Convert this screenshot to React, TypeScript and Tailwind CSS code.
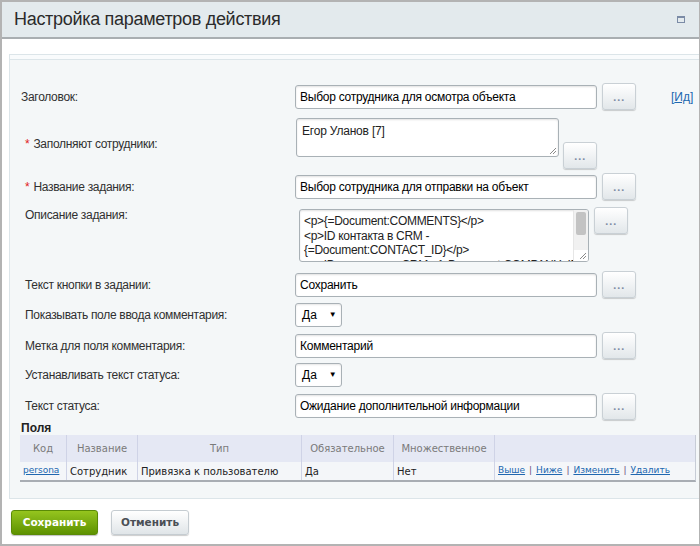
import React from "react";

const Dots = ({ cls = "" }: { cls?: string }) => (
  <div
    className={`h-[27px] w-[34px] shrink-0 rounded-[3px] border border-[#c9d0d5] bg-linear-to-b from-white to-[#e2e7ea] shadow-[0_1px_1px_rgba(0,0,0,0.18)] flex items-center justify-center ${cls}`}
  >
    <span className="text-[#7f8ba3] text-[9px] leading-none font-bold tracking-[0.5px] pt-[3px] font-['DejaVu_Sans',sans-serif]">
      ...
    </span>
  </div>
);

const Input = ({ value, w = "w-[302px]" }: { value: string; w?: string }) => (
  <div
    className={`h-[24px] ${w} shrink-0 rounded-[3px] border border-[#a9b1b6] bg-white shadow-[inset_0_1px_2px_rgba(0,0,0,0.12)] pl-[4px] flex items-center text-[12px] tracking-[-0.25px] text-black whitespace-nowrap overflow-hidden`}
  >
    {value}
  </div>
);

const Select = () => (
  <div className="h-[24px] w-[47px] rounded-[3px] border border-[#a9b1b6] bg-white shadow-[inset_0_1px_2px_rgba(0,0,0,0.1)] pl-[6px] flex items-center text-[12px] text-black">
    <span>Да</span>
    <span className="ml-[12px] text-[8px] leading-none">▼</span>
  </div>
);

const Grip = () => (
  <svg className="absolute right-[1px] bottom-[1px]" width="8" height="8" viewBox="0 0 8 8">
    <line x1="7" y1="1" x2="1" y2="7" stroke="#8a8a8a" strokeWidth="1" />
    <line x1="7" y1="4" x2="4" y2="7" stroke="#8a8a8a" strokeWidth="1" />
  </svg>
);

const Label = ({ text, req = false, cls = "" }: { text: string; req?: boolean; cls?: string }) => (
  <div className={`w-[270px] shrink-0 pl-[15px] text-[12px] tracking-[-0.3px] text-[#303030] ${cls}`}>
    {req && <span className="text-[#e02020] mr-[4px]">*</span>}
    {text}
  </div>
);

export default function App() {
  return (
    <div className="w-[700px] h-[546px] bg-white border-2 border-r border-[#b3b3b3] flex flex-col font-['Liberation_Sans',Arial,sans-serif] overflow-hidden">
      {/* title bar */}
      <div className="h-[37px] shrink-0 bg-[#e3eaed] border-b-2 border-[#a9aeb1] flex items-center pl-[12px] pr-[14px]">
        <div className="text-[18px] text-[#2b2b2b] tracking-[-0.3px]">Настройка параметров действия</div>
        <div className="ml-auto w-[8px] h-[7px] border border-[#7b8ba6] border-t-2" />
      </div>

      {/* body */}
      <div className="flex-1 flex flex-col pt-[15px] pl-[7px]">
        <div className="h-[445px] border-l border-t border-b border-[#dce5e9] bg-[#f4f7f8] flex flex-col">
          <div className="h-[5px] bg-[#f9fbfc] border-b border-[#dce5e9]" />
          <div className="flex flex-col">
            {/* R1 */}
            <div className="mt-[23px] h-[27px] flex items-center">
              <Label text="Заголовок:" cls="!pl-[11px] w-[274px]" />
              <div className="ml-[11px] flex items-center">
                <Input value="Выбор сотрудника для осмотра объекта" />
                <Dots cls="ml-[5px]" />
              </div>
              <div className="ml-[35px] text-[12px] text-[#2067b0]">
                [<span className="underline">Ид</span>]
              </div>
            </div>
            {/* R2 */}
            <div className="mt-[8px] h-[51px] flex items-center">
              <Label text="Заполняют сотрудники:" req />
              <div className="ml-[16px] h-full flex">
                <div className="relative h-[39px] w-[263px] rounded-[3px] border border-[#a9b1b6] bg-white shadow-[inset_0_1px_2px_rgba(0,0,0,0.12)] pl-[5px] pt-[3px] text-[12px] tracking-[-0.2px] text-[#222]">
                  Егор Уланов [7]
                  <Grip />
                </div>
                <Dots cls="ml-[4px] self-end" />
              </div>
            </div>
            {/* R3 */}
            <div className="mt-[5px] h-[25px] flex items-center">
              <Label text="Название задания:" req />
              <div className="ml-[15px] flex items-center">
                <Input value="Выбор сотрудника для отправки на объект" />
                <Dots cls="ml-[5px] h-[25px]" />
              </div>
            </div>
            {/* R4 */}
            <div className="mt-[8px] h-[55px] flex items-start">
              <Label text="Описание задания:" cls="-mt-[1px]" />
              <div className="ml-[19px] flex items-start">
                <div className="relative mt-[2px] h-[53px] w-[290px] rounded-[3px] border border-[#a9b1b6] bg-white shadow-[inset_0_1px_2px_rgba(0,0,0,0.12)] overflow-hidden flex">
                  <div className="flex-1 pl-[4px] pt-[4px] text-[12px] tracking-[-0.3px] leading-[14.5px] text-[#222] whitespace-nowrap overflow-hidden">
                    <div>&lt;p&gt;{"{=Document:COMMENTS}"}&lt;/p&gt;</div>
                    <div>&lt;p&gt;ID контакта в CRM -</div>
                    <div>{"{=Document:CONTACT_ID}"}&lt;/p&gt;</div>
                    <div>&lt;p&gt;ID компании в CRM - {"{=Document:COMPANY_ID}"}&lt;/p&gt;</div>
                  </div>
                  <div className="w-[15px] shrink-0 bg-[#f1f1f1] border-l border-[#e6e6e6] relative">
                    <div className="mx-[2px] mt-[2px] h-[23px] rounded-[2px] bg-[#c3c3c3]" />
                    <div className="absolute bottom-0 left-0 right-0 h-[11px] bg-white" />
                  </div>
                  <Grip />
                </div>
                <Dots cls="ml-[5px]" />
              </div>
            </div>
            {/* R5 */}
            <div className="mt-[9px] h-[27px] flex items-center">
              <Label text="Текст кнопки в задании:" />
              <div className="ml-[15px] flex items-center">
                <Input value="Сохранить" />
                <Dots cls="ml-[5px]" />
              </div>
            </div>
            {/* R6 */}
            <div className="mt-[5px] h-[24px] flex items-center">
              <Label text="Показывать поле ввода комментария:" />
              <div className="ml-[15px]">
                <Select />
              </div>
            </div>
            {/* R7 */}
            <div className="mt-[5px] h-[27px] flex items-center">
              <Label text="Метка для поля комментария:" />
              <div className="ml-[15px] flex items-center">
                <Input value="Комментарий" />
                <Dots cls="ml-[5px]" />
              </div>
            </div>
            {/* R8 */}
            <div className="mt-[4px] h-[24px] flex items-center">
              <Label text="Устанавливать текст статуса:" />
              <div className="ml-[15px]">
                <Select />
              </div>
            </div>
            {/* R9 */}
            <div className="mt-[6px] h-[26px] flex items-center">
              <Label text="Текст статуса:" />
              <div className="ml-[15px] flex items-center">
                <Input value="Ожидание дополнительной информации" />
                <Dots cls="ml-[5px] h-[26px]" />
              </div>
            </div>
            {/* Поля */}
            <div className="pl-[11px] text-[12px] font-bold text-[#222] leading-[14px] mt-[2px]">Поля</div>
            <div className="ml-[10px] w-[676px] border-r border-b-2 border-[#c7ccd6] border-b-[#a8adb3] font-['DejaVu_Sans',Verdana,sans-serif] text-[10px]">
              <div className="h-[27px] bg-[#e5e8f4] flex text-[#7a7a7a]">
                <div className="w-[47px] flex items-center justify-center border-r border-[#cfd3e6]">Код</div>
                <div className="w-[71px] flex items-center justify-center border-r border-[#cfd3e6]">Название</div>
                <div className="w-[164px] flex items-center justify-center border-r border-[#cfd3e6]">Тип</div>
                <div className="w-[92px] flex items-center justify-center border-r border-[#cfd3e6]">Обязательное</div>
                <div className="w-[101px] flex items-center justify-center border-r border-[#cfd3e6]">Множественное</div>
                <div className="flex-1" />
              </div>
              <div className="h-[18px] bg-[#f4f6f9] flex text-[#222] items-stretch">
                <div className="w-[47px] flex items-center pl-[3px] border-r border-[#cfd3e6]">
                  <span className="text-[#2067b0] underline text-[9px]">persona</span>
                </div>
                <div className="w-[71px] flex items-center pl-[3px] border-r border-[#cfd3e6]">Сотрудник</div>
                <div className="w-[164px] flex items-center pl-[3px] border-r border-[#cfd3e6]">Привязка к пользователю</div>
                <div className="w-[92px] flex items-center pl-[3px] border-r border-[#cfd3e6]">Да</div>
                <div className="w-[101px] flex items-center pl-[3px] border-r border-[#cfd3e6]">Нет</div>
                <div className="flex-1 flex items-center pl-[3px] text-[#2067b0] text-[9px]">
                  <span className="underline">Выше</span>
                  <span className="mx-[4px] text-[#6a4a7a]">|</span>
                  <span className="underline">Ниже</span>
                  <span className="mx-[4px] text-[#6a4a7a]">|</span>
                  <span className="underline">Изменить</span>
                  <span className="mx-[4px] text-[#6a4a7a]">|</span>
                  <span className="underline">Удалить</span>
                </div>
              </div>
            </div>
          </div>
        </div>

        {/* buttons */}
        <div className="mt-[11px] ml-[2px] flex gap-[13px] font-['DejaVu_Sans',Verdana,sans-serif] text-[10.5px] font-bold">
          <div className="h-[25px] w-[87px] rounded-[3px] bg-linear-to-b from-[#95c51e] to-[#5e9200] border border-[#5a8a06] shadow-[0_1px_1px_rgba(0,0,0,0.25)] flex items-center justify-center text-white">
            Сохранить
          </div>
          <div className="h-[25px] w-[78px] rounded-[3px] bg-linear-to-b from-white to-[#e0e5e8] border border-[#c5ccd1] shadow-[0_1px_1px_rgba(0,0,0,0.2)] flex items-center justify-center text-[#4a4f55]">
            Отменить
          </div>
        </div>
      </div>
    </div>
  );
}
